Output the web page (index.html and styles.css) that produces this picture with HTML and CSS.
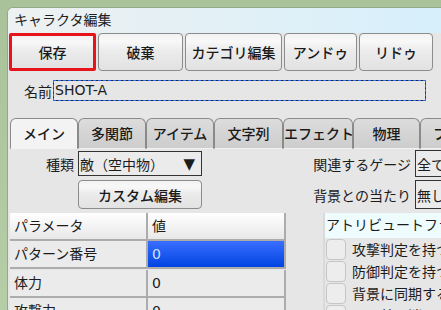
FILE: index.html
```html
<!DOCTYPE html>
<html lang="ja">
<head>
    <meta charset="UTF-8">
    <title>キャラクタ編集</title>
    <link rel="stylesheet" href="styles.css">
</head>
<body>
    <div class="window">
        <div class="titlebar">キャラクタ編集</div>

        <div class="toolbar">
            <button class="btn btn-focus w-save">保存</button>
            <button class="btn w-discard">破棄</button>
            <button class="btn w-category">カテゴリ編集</button>
            <button class="btn w-undo">アンドゥ</button>
            <button class="btn w-redo">リドゥ</button>
        </div>

        <div class="name-row">
            <span class="name-label">名前</span>
            <div class="name-input">SHOT-A</div>
        </div>

        <div class="tabs">
            <div class="tab active t68">メイン</div>
            <div class="tab t68">多関節</div>
            <div class="tab t68">アイテム</div>
            <div class="tab t69">文字列</div>
            <div class="tab t70">エフェクト</div>
            <div class="tab t67">物理</div>
            <div class="tab t68">フラグ</div>
        </div>

        <div class="tab-content">
            <div class="form-grid">
                <span class="form-label">種類</span>
                <div class="combo"><span>敵（空中物）</span><span class="arrow">▼</span></div>
                <span class="form-label">関連するゲージ</span>
                <div class="select-box">全て</div>

                <span></span>
                <button class="btn btn-small">カスタム編集</button>
                <span class="form-label">背景との当たり</span>
                <div class="select-box">無し</div>
            </div>

            <div class="lower">
                <div class="param-table">
                    <div class="cell head">パラメータ</div>
                    <div class="cell head">値</div>
                    <div class="cell">パターン番号</div>
                    <div class="cell selected">0</div>
                    <div class="cell">体力</div>
                    <div class="cell">0</div>
                    <div class="cell">攻撃力</div>
                    <div class="cell">0</div>
                </div>

                <div class="attr-panel">
                    <div class="attr-head">アトリビュートフラグ</div>
                    <div class="check-row"><span class="check"></span>攻撃判定を持つ</div>
                    <div class="check-row"><span class="check"></span>防御判定を持つ</div>
                    <div class="check-row"><span class="check"></span>背景に同期する</div>
                    <div class="check-row"><span class="check"></span>画面外で消える</div>
                </div>
            </div>
        </div>
    </div>
</body>
</html>
```

FILE: styles.css
```css
body {
    margin: 0;
    width: 441px;
    height: 310px;
    overflow: hidden;
    background: linear-gradient(#a9c29a, #b6cea8);
    font-family: "DejaVu Sans", "Noto Sans CJK JP", sans-serif;
    font-size: 14px;
    color: #1c1c1c;
}

.window {
    margin: 7px 0 0 7px;
    height: 303px;
    border-top: 1px solid #93aa88;
    border-left: 1px solid #93aa88;
    border-top-left-radius: 6px;
    background-color: #e6e6e6;
    overflow: hidden;
}

.titlebar {
    height: 25px;
    line-height: 25px;
    padding-left: 6px;
    background: linear-gradient(to right, #eef1f1, #d6effb);
    color: #202020;
    white-space: nowrap;
}

/* barra de botões */
.toolbar {
    display: flex;
    gap: 2px;
    height: 38px;
    padding-left: 1px;
}

.btn {
    box-sizing: border-box;
    height: 38px;
    border: 1px solid #8c8c8c;
    border-radius: 4px;
    background: linear-gradient(#f2f2f2 0%, #f8f8f8 20%, #ececec 45%, #e2e2e2 100%);
    font-family: inherit;
    font-size: 14px;
    font-weight: 500;
    color: #1a1a1a;
    padding: 0;
    white-space: nowrap;
}

.btn-focus {
    border: 3px solid #e8141c;
    border-radius: 2px;
}

.w-save { width: 87px; }
.w-discard { width: 85px; }
.w-category { width: 97px; }
.w-undo { width: 73px; }
.w-redo { width: 74px; }

.name-row {
    display: flex;
    align-items: center;
    padding: 9px 0 0 16px;
}

.name-label {
    width: 29px;
}

.name-input {
    box-sizing: border-box;
    width: 373px;
    height: 21px;
    line-height: 19px;
    padding-left: 1px;
    border: 1px solid #1e2a44;
    outline: 1px dashed #2f6ee8;
    outline-offset: -1px;
    background-color: #e6e6e6;
}

/* abas */
.tabs {
    display: flex;
    height: 31px;
    margin-top: 17px;
    padding-left: 2px;
    white-space: nowrap;
}

.tab {
    box-sizing: border-box;
    flex-shrink: 0;
    height: 31px;
    line-height: 31px;
    text-align: center;
    overflow: hidden;
    border: 1px solid #8a8a8a;
    border-bottom: 1px solid #f2f2f2;
    border-radius: 6px 6px 0 0;
    background: linear-gradient(#dcdcdc, #cdcdcd);
    font-weight: 500;
    color: #1a1a1a;
}

.tab.active {
    background: #f3f3f3;
    border-bottom-color: #f3f3f3;
}

.t67 { width: 67px; }
.t68 { width: 68px; }
.t69 { width: 69px; }
.t70 { width: 70px; }

.tab-content {
    padding: 1px 0 0 2px;
}

.form-grid {
    display: grid;
    grid-template-columns: 64px 124px 205px 60px;
    grid-template-rows: 27px 29px;
    column-gap: 4px;
    row-gap: 3px;
    white-space: nowrap;
}

.form-label {
    align-self: center;
    text-align: right;
}

.combo {
    box-sizing: border-box;
    align-self: center;
    height: 25px;
    display: flex;
    align-items: center;
    justify-content: space-between;
    padding: 0 6px 0 1px;
    border: 1px solid #333;
    background-color: #ebebeb;
}

.arrow {
    font-size: 15px;
}

.btn-small {
    height: 29px;
}

.select-box {
    box-sizing: border-box;
    height: 100%;
    display: flex;
    align-items: center;
    padding-left: 1px;
    border: 1px solid #333;
    background-color: #ebebeb;
}

.lower {
    display: flex;
    margin-top: 4px;
}

.param-table {
    display: grid;
    grid-template-columns: 138px 138px;
    width: 276px;
    flex-shrink: 0;
}

.cell {
    box-sizing: border-box;
    height: 28px;
    line-height: 26px;
    padding-left: 4px;
    border-bottom: 2px solid #acacac;
    border-right: 2px solid #acacac;
    background-color: #ebebeb;
    white-space: nowrap;
}

.cell.head {
    background: linear-gradient(#ffffff, #e8e8e8);
}

.cell.selected {
    background: linear-gradient(#3a6eff, #0044e2);
    color: #d2e2ff;
}

.attr-panel {
    margin-left: 37px;
    border-left: 2px solid #dadada;
    flex: 1;
    white-space: nowrap;
}

.attr-head {
    height: 25px;
    line-height: 25px;
    padding-left: 1px;
    background-color: #effcfd;
}

.check-row {
    display: flex;
    align-items: center;
    height: 22px;
}

.check-row:first-of-type {
    margin-top: 1px;
}

.check {
    box-sizing: border-box;
    width: 20px;
    height: 21px;
    margin: 0 6px 0 1px;
    border: 1px solid #c6c6c6;
    border-radius: 4px;
    background-color: #ededed;
}
```
